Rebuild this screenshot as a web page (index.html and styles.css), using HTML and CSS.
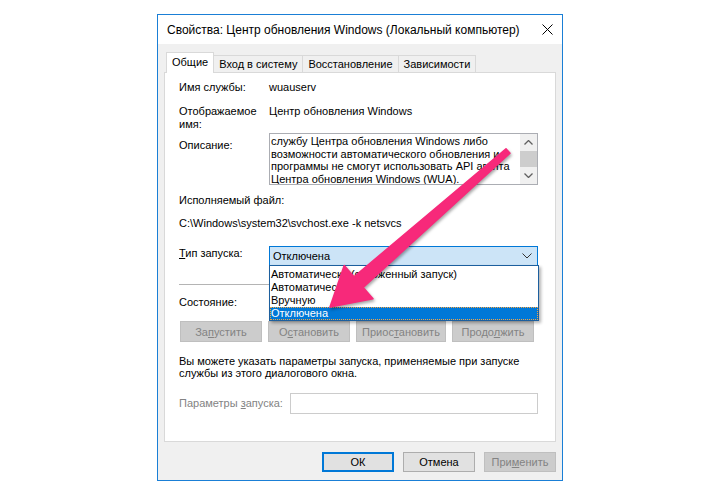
FILE: index.html
```html
<!DOCTYPE html>
<html lang="ru">
<head>
<meta charset="UTF-8">
<title>Свойства: Центр обновления Windows</title>
<link rel="stylesheet" href="styles.css">
</head>
<body>
<div class="dialog">
    <div class="titlebar">
        <span>Свойства: Центр обновления Windows (Локальный компьютер)</span>
        <svg class="close" width="11" height="11" viewBox="0 0 11 11"><path d="M0.5 0.5L10.5 10.5M10.5 0.5L0.5 10.5" stroke="#000" stroke-width="1"/></svg>
    </div>
    <div class="dialog-body">
        <div class="tabs">
            <div class="tab active">Общие</div>
            <div class="tab">Вход в систему</div>
            <div class="tab">Восстановление</div>
            <div class="tab">Зависимости</div>
        </div>
        <div class="panel">
            <div class="row row-name">
                <div class="label">Имя службы:</div>
                <div class="value">wuauserv</div>
            </div>
            <div class="row row-display">
                <div class="label">Отображаемое<br>имя:</div>
                <div class="value">Центр обновления Windows</div>
            </div>
            <div class="row row-desc">
                <div class="label">Описание:</div>
                <div class="textbox">
                    <div class="textbox-text">службу Центра обновления Windows либо<br>возможности автоматического обновления и<br>программы не смогут использовать API агента<br>Центра обновления Windows (WUA).</div>
                    <div class="scrollbar">
                        <div class="scroll-btn"><svg width="9" height="5" viewBox="0 0 9 5"><polyline points="0.5,4.5 4.5,0.5 8.5,4.5" fill="none" stroke="#606060" stroke-width="1.3"/></svg></div>
                        <div class="scroll-thumb"></div>
                        <div class="scroll-track"></div>
                        <div class="scroll-btn"><svg width="9" height="5" viewBox="0 0 9 5"><polyline points="0.5,0.5 4.5,4.5 8.5,0.5" fill="none" stroke="#606060" stroke-width="1.3"/></svg></div>
                    </div>
                </div>
            </div>
            <div class="line exe-label">Исполняемый файл:</div>
            <div class="line exe-path">C:\Windows\system32\svchost.exe -k netsvcs</div>
            <div class="row row-startup">
                <div class="label"><u>Т</u>ип запуска:</div>
                <div class="combo">
                    <span>Отключена</span>
                    <svg width="10" height="6" viewBox="0 0 10 6"><polyline points="0.5,0.5 5,5 9.5,0.5" fill="none" stroke="#333" stroke-width="1"/></svg>
                    <div class="combo-list">
                        <div class="combo-item">Автоматически (отложенный запуск)</div>
                        <div class="combo-item">Автоматически</div>
                        <div class="combo-item">Вручную</div>
                        <div class="combo-item selected">Отключена</div>
                    </div>
                </div>
            </div>
            <div class="separator"></div>
            <div class="line status">Состояние:</div>
            <div class="service-buttons">
                <button class="btn disabled w82">За<u>п</u>устить</button>
                <button class="btn disabled w82">О<u>с</u>тановить</button>
                <button class="btn disabled w90">Приос<u>т</u>ановить</button>
                <button class="btn disabled w82">Продо<u>л</u>жить</button>
            </div>
            <div class="hint">Вы можете указать параметры запуска, применяемые при запуске<br>службы из этого диалогового окна.</div>
            <div class="row row-params">
                <div class="label params-label">Параметры <u>з</u>апуска:</div>
                <div class="input"></div>
            </div>
        </div>
        <div class="actions">
            <button class="btn default">ОК</button>
            <button class="btn">Отмена</button>
            <button class="btn disabled">При<u>м</u>енить</button>
        </div>
    </div>
</div>

<!-- annotation arrow drawn over the screenshot -->
<svg class="arrow" width="718" height="494" viewBox="0 0 718 494">
    <polygon points="510,153.3 506,148.7 354,276.8 344.2,265.5 330,307 373,298.7 363.2,287.4" fill="#f7297a" stroke="#f7297a" stroke-width="1.5" stroke-linejoin="round"/>
</svg>
</body>
</html>
```

FILE: styles.css
```css
body {
    margin: 0;
    font-family: "Liberation Sans", Arial, sans-serif;
    font-size: 11px;
    color: #000;
    background: #fff;
}

.dialog {
    width: 404px;
    margin: 14px 0 0 157px;
    border: 1px solid #1a7fd6;
    background: #f0f0f0;
}

.titlebar {
    height: 29px;
    display: flex;
    align-items: center;
    justify-content: space-between;
    padding: 0 9px;
    background: #fff;
    font-size: 12px;
}

.dialog-body {
    padding: 8px 6px;
}

.tabs {
    display: flex;
    align-items: flex-end;
    height: 20px;
    padding-left: 2px;
}

.tab {
    box-sizing: border-box;
    height: 17px;
    line-height: 16px;
    padding: 0 5px;
    border: 1px solid #d9d9d9;
    border-bottom: none;
    margin-left: -1px;
    background: #f0f0f0;
}

.tab.active {
    height: 21px;
    line-height: 19px;
    margin-bottom: -1px;
    margin-left: 0;
    background: #fff;
    position: relative;
    z-index: 1;
}

.panel {
    box-sizing: border-box;
    height: 370px;
    border: 1px solid #d9d9d9;
    background: #fff;
    padding: 7px 17px 0 14px;
}

.row {
    display: flex;
    align-items: flex-start;
}

.label {
    width: 90px;
    flex-shrink: 0;
}

.line, .row-name {
    line-height: 15px;
}

.row-display {
    margin-top: 10px;
    line-height: 13px;
}

.row-desc {
    margin-top: 2px;
}

.row-desc .label {
    padding-top: 6px;
    line-height: 13px;
}

.textbox {
    flex: 1;
    display: flex;
    height: 52px;
    box-sizing: border-box;
    border: 1px solid #abadb3;
}

.textbox-text {
    flex: 1;
    padding: 1px 0 0 1px;
    line-height: 12.5px;
    white-space: nowrap;
    overflow: hidden;
}

.scrollbar {
    width: 17px;
    display: flex;
    flex-direction: column;
    background: #f0f0f0;
}

.scroll-btn {
    height: 17px;
    display: flex;
    align-items: center;
    justify-content: center;
}

.scroll-thumb {
    height: 16px;
    background: #cdcdcd;
}

.scroll-track {
    flex: 1;
}

.exe-label {
    margin-top: 8px;
}

.exe-path {
    margin-top: 8px;
}

.row-startup {
    margin-top: 15px;
    line-height: 15px;
}

.combo {
    flex: 1;
    position: relative;
    box-sizing: border-box;
    height: 20px;
    display: flex;
    align-items: center;
    justify-content: space-between;
    padding: 0 5px 0 3px;
    border: 1px solid #0078d7;
    background: #cce4f7;
}

.combo-list {
    position: absolute;
    top: 18px;
    left: -1px;
    right: -2px;
    padding-top: 2px;
    border: 1px solid #1c5f9e;
    background: #fff;
    box-shadow: 2px 2px 3px rgba(0, 0, 0, 0.3);
    z-index: 2;
}

.combo-item {
    line-height: 13px;
    padding-left: 1px;
}

.combo-item.selected {
    background: #0078d7;
    color: #fff;
    outline: 1px dotted #f7a440;
    outline-offset: -1px;
}

.separator {
    margin-top: 18px;
    height: 1px;
    background: #b4b4b4;
}

.status {
    margin-top: 10px;
}

.service-buttons {
    display: flex;
    gap: 6px;
    margin-top: 11px;
    padding-left: 1px;
}

.btn {
    box-sizing: border-box;
    height: 20px;
    width: 72px;
    padding: 0;
    font: inherit;
    color: #000;
    border: 1px solid #adadad;
    background: #e1e1e1;
}

.service-buttons .btn {
    height: 21px;
}

.btn.w82 {
    width: 82px;
}

.btn.w90 {
    width: 90px;
}

.btn.default {
    border: 2px solid #0078d7;
}

.btn.disabled {
    color: #838383;
    border-color: #bfbfbf;
    background: #cccccc;
}

.hint {
    margin-top: 13px;
    line-height: 12px;
}

.row-params {
    margin-top: 14px;
    line-height: 21px;
}

.params-label {
    width: 111px;
    color: #838383;
}

.input {
    flex: 1;
    height: 21px;
    box-sizing: border-box;
    border: 1px solid #cccccc;
}

.actions {
    display: flex;
    justify-content: flex-end;
    gap: 9px;
    margin-top: 10px;
}

.arrow {
    position: absolute;
    top: 0;
    left: 0;
    z-index: 5;
    pointer-events: none;
    filter: drop-shadow(1px 2px 1.5px rgba(0, 0, 0, 0.35));
}
```
